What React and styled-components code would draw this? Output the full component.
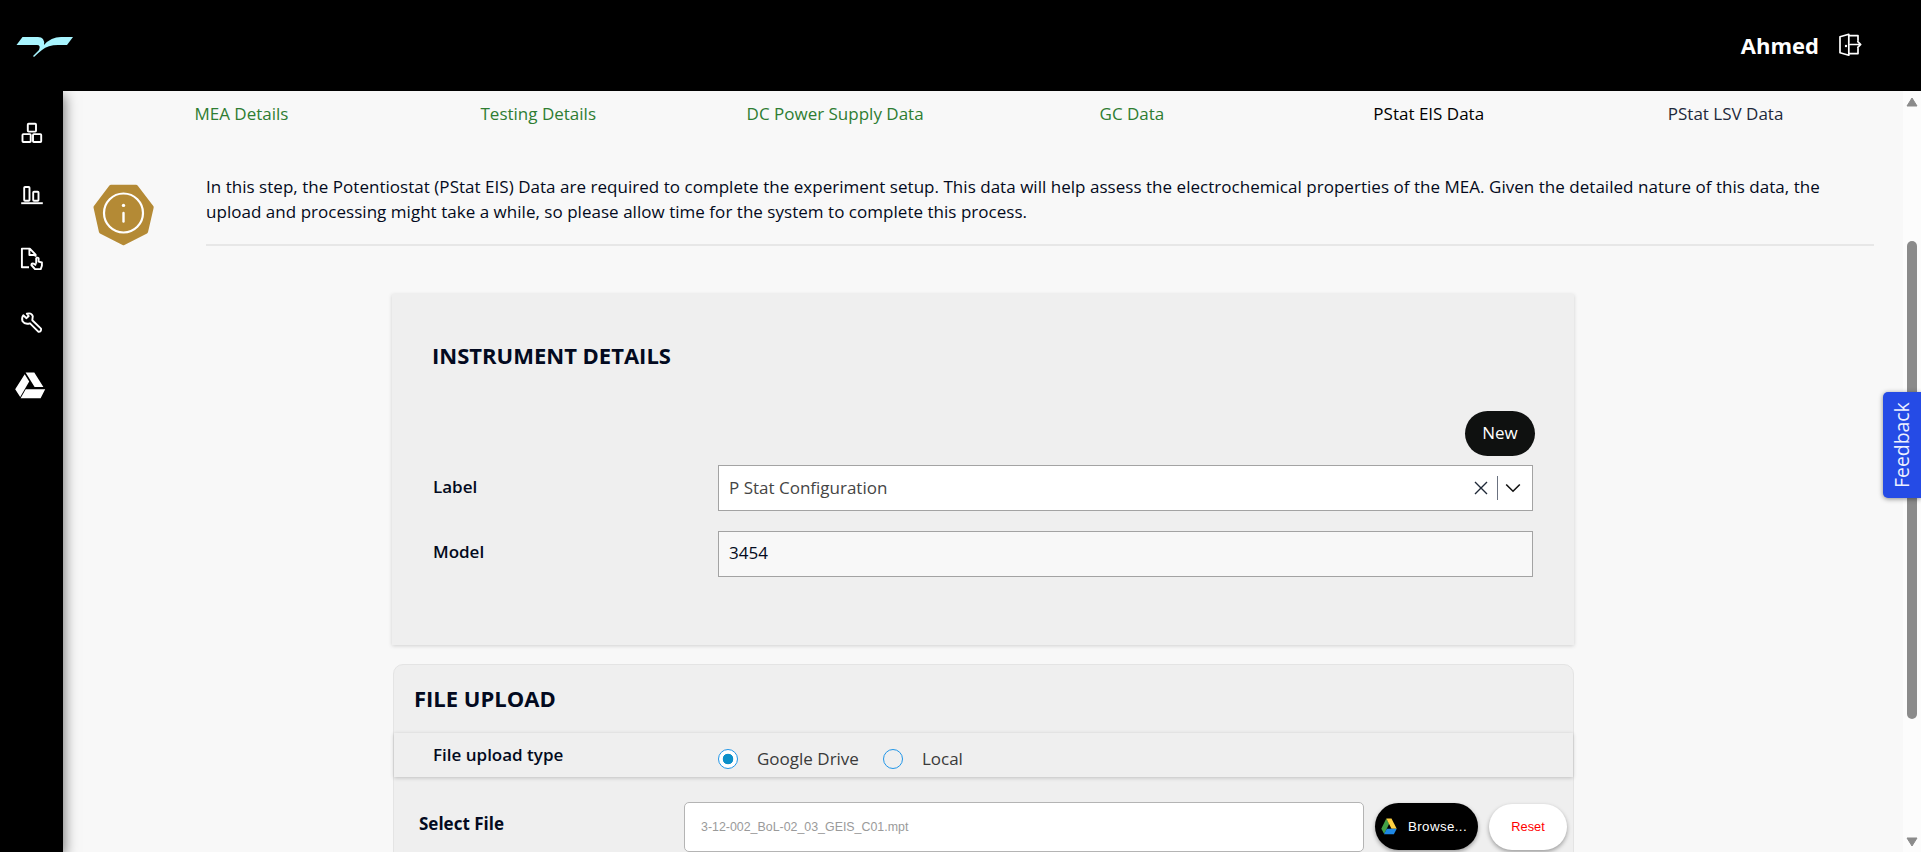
import React from 'react';
import styled, { createGlobalStyle } from 'styled-components';

const Global = createGlobalStyle`
  *, *::before, *::after { box-sizing: border-box; }
  html, body { margin: 0; height: 100%; overflow: hidden; }
  body { font-family: "Open Sans", "Noto Sans", sans-serif; font-size: 17px; color: #030a20; background: #000; }
  button, input { font: inherit; }
`;

const Page = styled.div`
  display: flex;
  flex-direction: column;
  height: 852px;
  overflow: hidden;
`;

const Header = styled.header`
  height: 91px;
  flex: none;
  background: #000;
  display: flex;
  align-items: center;
  justify-content: space-between;
  padding: 0 59px 0 16px;
`;

const User = styled.div`
  display: flex;
  align-items: center;
  gap: 19px;
  color: #fff;
  font-size: 22px;
  font-weight: 700;
  margin-top: -2px;
  svg { display: block; }
`;

const Body = styled.div`
  flex: 1;
  min-height: 0;
  display: flex;
`;

const Sidebar = styled.nav`
  width: 63px;
  flex: none;
  background: #000;
  display: flex;
  flex-direction: column;
  align-items: center;
  padding-top: 26px;
  gap: 31.2px;
  box-shadow: 2px 4px 12px rgba(0, 0, 0, 0.5);
  clip-path: inset(0 -24px 0 0);
  z-index: 1;
`;

const NavItem = styled.a`
  width: 32px;
  height: 32px;
  display: block;
  svg { display: block; }
`;

const Main = styled.main`
  flex: 1;
  min-width: 0;
  overflow: hidden;
  background: #f8f8f8;
  padding: 0 29px 0 30px;
`;

const Steps = styled.ol`
  list-style: none;
  margin: 0;
  padding: 10px 0 0;
  display: grid;
  grid-template-columns: repeat(6, 1fr);
`;

const Step = styled.li`
  text-align: center;
  line-height: 26px;
  color: ${(p) => (p.$state === 'done' ? '#2e7d32' : p.$state === 'active' ? '#000' : '#1e293b')};
`;

const Notice = styled.section`
  display: flex;
  align-items: flex-start;
  padding-top: 47px;
`;

const NoticeIcon = styled.div`
  width: 113px;
  flex: none;
  padding-top: 10px;
  svg { display: block; }
`;

const NoticeText = styled.p`
  flex: 1;
  margin: 0;
  padding: 0 20px 20px 0;
  line-height: 25px;
  letter-spacing: 0.03px;
  border-bottom: 2px solid #e7e7e7;
`;

const Instrument = styled.section`
  width: 1182px;
  height: 351px;
  margin: 48px 0 0 299px;
  padding: 44px 41px 0 40px;
  background: #efefef;
  box-shadow: 0 1px 4px rgba(0, 0, 0, 0.16);
`;

const Title = styled.h2`
  margin: 0;
  font-size: 22px;
  line-height: 34px;
  font-weight: 700;
`;

const Actions = styled.div`
  display: flex;
  justify-content: flex-end;
  margin: 39px -2px 9px 0;
`;

const NewButton = styled.button`
  width: 70px;
  height: 45px;
  border: 0;
  border-radius: 23px;
  background: #0f1110;
  color: #fff;
  padding: 0 0 2px;
`;

const Field = styled.div`
  display: flex;
  margin-bottom: 20px;
`;

const Label = styled.label`
  width: ${(p) => p.$width || 286}px;
  flex: none;
  padding-left: 1px;
  font-weight: ${(p) => p.$weight || 600};
  line-height: ${(p) => p.$line || 43}px;
`;

const Box = styled.div`
  flex: 1;
  height: 46px;
  border: 1px solid #a3a3a3;
  background: ${(p) => (p.$muted ? '#f8f8f8' : '#fff')};
  color: ${(p) => (p.$muted ? '#030a20' : '#454545')};
  padding: 0 11px ${(p) => (p.$muted ? 3 : 1)}px 10px;
  display: flex;
  align-items: center;
`;

const Value = styled.span`
  flex: 1;
`;

const Divider = styled.i`
  width: 1px;
  height: 24px;
  margin: 0 7px 0 9px;
  background: #6b7280;
`;

const Upload = styled.section`
  width: 1181px;
  height: 300px;
  margin: 19px 0 0 300px;
  border: 1px solid #e4e4e4;
  border-radius: 10px;
  background: #efefef;
`;

const UploadTitle = styled(Title)`
  padding: 16px 0 18px 20px;
`;

const TypeRow = styled.div`
  height: 44px;
  padding-left: 38px;
  display: flex;
  background: #efefef;
  box-shadow: 0 1px 4px rgba(0, 0, 0, 0.2);
`;

const Radio = styled.label`
  display: flex;
  align-items: center;
  gap: 19px;
  margin-right: 24px;
  padding-top: 7px;
  color: #3a3a3a;
`;

const Dot = styled.span`
  width: 20px;
  height: 20px;
  border: 1.5px solid #2196e8;
  border-radius: 50%;
  background: ${(p) => (p.$on ? 'radial-gradient(circle, #0b8fc9 0 5px, #fff 5.6px)' : 'transparent')};
`;

const FileRow = styled.div`
  display: flex;
  align-items: flex-start;
  padding: 25px 0 0 24px;
`;

const FileInput = styled.div`
  width: 680px;
  height: 50px;
  border: 1px solid #b4b4b4;
  border-radius: 5px;
  background: #fff;
  padding-left: 16px;
  line-height: 48px;
  font-family: "Liberation Sans", Arial, sans-serif;
  font-size: 12.4px;
  color: #9a9a9a;
`;

const Pill = styled.button`
  width: ${(p) => p.$width}px;
  height: ${(p) => p.$height}px;
  margin: ${(p) => p.$margin};
  border: 0;
  border-radius: 24px;
  padding: 0 ${(p) => (p.$dark ? 5 : 0)}px 1px 0;
  display: flex;
  align-items: center;
  justify-content: center;
  gap: 11px;
  font-family: "Liberation Sans", Arial, sans-serif;
  font-size: ${(p) => (p.$dark ? 13.3 : 12.8)}px;
  letter-spacing: ${(p) => (p.$dark ? 0.4 : 0)}px;
  background: ${(p) => (p.$dark ? '#000' : '#fff')};
  color: ${(p) => (p.$dark ? '#fff' : '#f00')};
  box-shadow: 0 2px 4px rgba(0, 0, 0, 0.35);
`;

const Scrollbar = styled.div`
  width: 18px;
  flex: none;
  background: #fcfcfc;
  display: flex;
  flex-direction: column;
  align-items: center;
  padding: 6px 0 5px;
  svg { display: block; }
`;

const Thumb = styled.div`
  width: 10px;
  height: 478px;
  margin: 134px 0 auto;
  border-radius: 5px;
  background: #8b8b8b;
`;

const Feedback = styled.button`
  position: absolute;
  right: 0;
  top: 391.6px;
  width: 38px;
  height: 106px;
  border: 0;
  border-radius: 5px 0 0 5px;
  padding: 0;
  background: #254be6;
  color: #eef1ff;
  font-size: 19.4px;
  font-weight: 500;
  line-height: 38px;
  writing-mode: vertical-rl;
  box-shadow: 0 1px 5px rgba(0, 0, 0, 0.45);
  z-index: 2;
  span { display: block; transform: rotate(180deg); }
`;

const Logo = () => (
  <svg width="58" height="22" viewBox="0 0 58 22">
    <path fill="#a8f5ff" d="M6.5 2H22Q29 2 28 10Q35 2 45 2H57L51 10H42Q32 10 26 15Q22 18 18 22L17 21L23 15Q25 10 21 10H.5Z" />
  </svg>
);

const Exit = () => (
  <svg width="24" height="24" viewBox="0 0 24 24" fill="none" stroke="#fff" strokeWidth="1.7" strokeLinecap="round" strokeLinejoin="round">
    <path d="M10.8 2.6H20V7.2M20 15.5V20.6H10.8M10.8 1.3V22.2L2 19.8V3.8ZM12.5 11.5H22.5M19.8 8.6L22.7 11.5L19.8 14.4" />
    <circle cx="8" cy="13" r="1.2" fill="#fff" stroke="none" />
  </svg>
);

const NavSvg = (props) => (
  <svg width="32" height="32" viewBox="0 0 32 32" fill="none" stroke="#fff" strokeWidth="1.9" strokeLinejoin="round" {...props} />
);

const Cubes = () => (
  <NavSvg>
    <rect x="11.8" y="6.8" width="8.2" height="7.8" rx="0.8" />
    <rect x="6.5" y="17.1" width="8.2" height="7.9" rx="0.8" />
    <rect x="17" y="17.1" width="8.2" height="7.9" rx="0.8" />
  </NavSvg>
);

const Bars = () => (
  <NavSvg>
    <rect x="8.2" y="7" width="5.3" height="13.7" rx="0.8" />
    <rect x="17.2" y="11.8" width="5.3" height="8.9" rx="0.8" />
    <path d="M5.2 23.2H26.8" />
  </NavSvg>
);

const FilePointer = () => (
  <NavSvg>
    <path d="M13 24.2H5.9V5.6H13.8L19.6 11.6V13.8M13.4 5.8V12H19.4" />
    <path d="M20.2 20.8V15.4Q21.4 13.8 22.6 15.4V18.6L25.9 19.5V22.8L24.7 26.1H19L15.4 22Q15.6 20 17.6 20.6L20.2 22.2" />
  </NavSvg>
);

const Wrench = () => (
  <NavSvg>
    <path d="M7.3 8.3L10.5 11.2L12.7 9L10.8 6.7Q15.6 5.4 16.8 9.2L16.3 13.2L25 21.6Q25.7 24.4 22.5 24.9L14 16.3Q9 18 6.5 14.3Q5.4 10.8 7.3 8.3Z" />
  </NavSvg>
);

const DriveWhite = () => (
  <NavSvg fill="#fff" stroke="none" overflow="visible">
    <path d="M9.6 2.4H18.3L27.4 16.9H18.6ZM8.7 4.2L13.2 11.6L4.2 27.1L-.8 19.2ZM9.7 19.2H29.2L24.6 28.2H4.6Z" />
  </NavSvg>
);

const DriveColor = () => (
  <svg width="16" height="17" viewBox="0 0 16 17">
    <path fill="#43a047" d="M5.3 .5L8.2 5.8L3.2 16L.3 10.7Z" />
    <path fill="#fdd041" d="M5.3 .5H10.5L15.7 10.7H10.5Z" />
    <path fill="#1e88e5" d="M5.8 10.7H15.7L12.9 16.3H3Z" />
  </svg>
);

const InfoBadge = () => (
  <svg width="62" height="62" viewBox="0 0 62 62">
    <path fill="#b48a35" stroke="#b48a35" strokeWidth="4" strokeLinejoin="round" d="M18 2.8H43L58.7 23.3L53.1 47.6L30.5 59.2L7.9 47.6L2.5 23.3Z" />
    <circle cx="30.5" cy="29" r="19.5" fill="none" stroke="#fff" strokeWidth="2.2" />
    <circle cx="30.5" cy="21.4" r="1.7" fill="#fff" />
    <path d="M30.5 29V37.5" stroke="#fff" strokeWidth="2.4" strokeLinecap="round" />
  </svg>
);

const Cross = () => (
  <svg width="14" height="14" viewBox="0 0 14 14" stroke="#1f2937" strokeWidth="1.4">
    <path d="M1 1L13 13M13 1L1 13" />
  </svg>
);

const Chevron = () => (
  <svg width="16" height="10" viewBox="0 0 16 10" fill="none" stroke="#111" strokeWidth="1.6">
    <path d="M1.2 1.5L8 8.2L14.8 1.5" />
  </svg>
);

const Arrow = ({ down }) => (
  <svg width="12" height="10" viewBox="0 0 12 10">
    <path fill="#8b8b8b" stroke="#8b8b8b" strokeLinejoin="round" d={down ? 'M1 1H11L6 9Z' : 'M1 9H11L6 1Z'} />
  </svg>
);

const steps = [
  ['MEA Details', 'done'],
  ['Testing Details', 'done'],
  ['DC Power Supply Data', 'done'],
  ['GC Data', 'done'],
  ['PStat EIS Data', 'active'],
  ['PStat LSV Data', 'next'],
];

const navIcons = [Cubes, Bars, FilePointer, Wrench, DriveWhite];

export default function App() {
  return (
    <Page>
      <Global />
      <Header>
        <Logo />
        <User>
          <span>Ahmed</span>
          <Exit />
        </User>
      </Header>
      <Body>
        <Sidebar>
          {navIcons.map((Icon, i) => (
            <NavItem key={i}><Icon /></NavItem>
          ))}
        </Sidebar>
        <Main>
          <Steps>
            {steps.map(([name, state]) => (
              <Step key={name} $state={state}>{name}</Step>
            ))}
          </Steps>
          <Notice>
            <NoticeIcon><InfoBadge /></NoticeIcon>
            <NoticeText>
              In this step, the Potentiostat (PStat EIS) Data are required to complete the experiment setup. This data will help assess the electrochemical properties of the MEA. Given the detailed nature of this data, the upload and processing might take a while, so please allow time for the system to complete this process.
            </NoticeText>
          </Notice>
          <Instrument>
            <Title>INSTRUMENT DETAILS</Title>
            <Actions><NewButton>New</NewButton></Actions>
            <Field>
              <Label>Label</Label>
              <Box>
                <Value>P Stat Configuration</Value>
                <Cross />
                <Divider />
                <Chevron />
              </Box>
            </Field>
            <Field>
              <Label $line={41}>Model</Label>
              <Box $muted><Value>3454</Value></Box>
            </Field>
          </Instrument>
          <Upload>
            <UploadTitle>FILE UPLOAD</UploadTitle>
            <TypeRow>
              <Label as="span">File upload type</Label>
              <Radio><Dot $on />Google Drive</Radio>
              <Radio><Dot />Local</Radio>
            </TypeRow>
            <FileRow>
              <Label $width={266} $weight={700} $line={44}>Select File</Label>
              <FileInput>3-12-002_BoL-02_03_GEIS_C01.mpt</FileInput>
              <Pill $dark $width={103} $height={47} $margin="1px 0 0 11px"><DriveColor />Browse...</Pill>
              <Pill $width={78} $height={46} $margin="2px 0 0 11px">Reset</Pill>
            </FileRow>
          </Upload>
        </Main>
        <Scrollbar>
          <Arrow />
          <Thumb />
          <Arrow down />
        </Scrollbar>
      </Body>
      <Feedback><span>Feedback</span></Feedback>
    </Page>
  );
}
